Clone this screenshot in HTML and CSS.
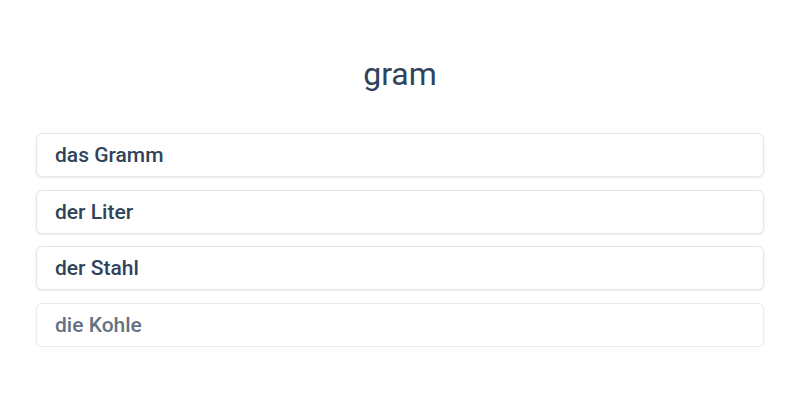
FILE: index.html
```html
<!DOCTYPE html>
<html lang="en">
<head>
<meta charset="UTF-8">
<meta name="viewport" content="width=device-width, initial-scale=1.0">
<title>Quiz</title>
<link rel="stylesheet" href="styles.css">
</head>
<body>
  <div class="quiz">
    <h1 class="word">gram</h1>
    <div class="options">
      <button class="option">das Gramm</button>
      <button class="option">der Liter</button>
      <button class="option">der Stahl</button>
      <button class="option faded">die Kohle</button>
    </div>
  </div>
</body>
</html>
```

FILE: styles.css
```css
body {
  margin: 0;
  font-family: Roboto, 'Noto Sans', sans-serif;
  background-color: #fff;
  color: #2c3e50;
}

.quiz {
  padding: 55px 36px 0;
}

.word {
  margin: 0 0 40px;
  font-size: 32px;
  font-weight: 400;
  line-height: 38px;
  text-align: center;
  color: #2f435a;
}

.options {
  display: flex;
  flex-direction: column;
  gap: 12.67px;
}

.option {
  display: block;
  width: 100%;
  height: 44px;
  padding: 0 18px;
  text-align: left;
  font-family: inherit;
  font-size: 21px;
  font-weight: 500;
  color: #2f435a;
  background-color: #fff;
  border: 1px solid #e6e6e6;
  border-radius: 6px;
  box-shadow: 0 1px 3px rgba(0, 0, 0, 0.08); /* soft card shadow */
  cursor: pointer;
}

.faded {
  opacity: 0.75;
}
```
